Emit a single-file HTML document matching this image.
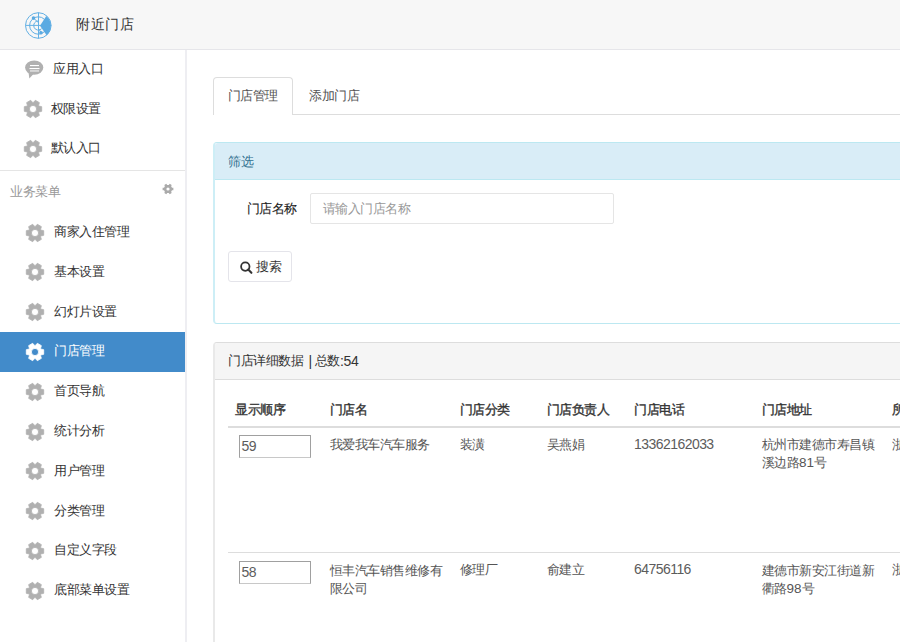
<!DOCTYPE html>
<html><head><meta charset="utf-8">
<style>
*{box-sizing:border-box;margin:0;padding:0}
html,body{width:900px;height:642px;overflow:hidden;background:#fff;font-family:"Liberation Sans",sans-serif;font-size:12.5px;letter-spacing:-0.5px;color:#333}
.a{position:absolute;white-space:nowrap;line-height:16px}
.hdr{position:absolute;left:0;top:0;width:900px;height:50px;background:#f7f7f7;border-bottom:1px solid #e6e6ea}
.side{position:absolute;left:0;top:50px;width:187px;height:592px;border-right:2px solid #eeeef2;background:#fff}
.act{position:absolute;left:0;top:332px;width:185px;height:40px;background:#428bca}
.mt{color:#333}
.sep{position:absolute;left:0;top:170px;width:185px;height:1px;background:#e5e5e5}
.tabline{position:absolute;left:213px;top:114px;width:700px;height:1px;background:#ddd}
.tab{position:absolute;left:213px;top:77px;width:80px;height:38px;border:1px solid #ddd;border-bottom:none;border-radius:4px 4px 0 0;background:#fff}
.p1{position:absolute;left:213px;top:142px;width:720px;height:182px;border:1px solid #bce8f1;border-left:2px solid #cdeef6;border-radius:4px}
.p1h{position:absolute;left:0;top:0;width:100%;height:37px;background:#d9edf7;border-bottom:1px solid #bce8f1;border-radius:3px 3px 0 0}
.inp{position:absolute;left:310px;top:193px;width:304px;height:31px;border:1px solid #e5e5e5;border-radius:2px;background:#fff}
.btn{position:absolute;left:228px;top:251px;width:64px;height:31px;border:1px solid #e4e4ea;border-radius:3px;background:#fff}
.p2{position:absolute;left:213px;top:342px;width:720px;height:400px;border:1px solid #ddd;border-left:2px solid #e9e9e9;border-radius:4px}
.p2h{position:absolute;left:0;top:0;width:100%;height:37px;background:#f5f5f5;border-bottom:1px solid #ddd;border-radius:3px 3px 0 0}
.th{-webkit-text-stroke:0.35px #333;color:#333}
.hl{position:absolute;left:228px;top:426px;width:700px;height:2px;background:#ddd}
.rl{position:absolute;left:228px;top:552px;width:700px;height:1px;background:#ddd}
.ni{position:absolute;width:72px;height:23px;border:1px solid #a0a0a0;border-bottom-color:#c8c8c8;background:#fff}
.td{color:#555}
.dg{font-size:14px;letter-spacing:-0.55px;color:#5c5c5c}
</style></head><body>
<svg width="0" height="0" style="position:absolute"><defs>
<path id="g" fill-rule="evenodd" d="M15.88 7.00 L18.69 7.67 L18.69 12.33 L15.88 13.00 L15.54 13.59 L16.36 16.36 L12.33 18.69 L10.35 16.59 L9.65 16.59 L7.67 18.69 L3.64 16.36 L4.46 13.59 L4.12 13.00 L1.31 12.33 L1.31 7.67 L4.12 7.00 L4.46 6.41 L3.64 3.64 L7.67 1.31 L9.65 3.41 L10.35 3.41 L12.33 1.31 L16.36 3.64 L15.54 6.41Z M13.60 10.00 A3.6 3.6 0 1 0 6.40 10.00 A3.6 3.6 0 1 0 13.60 10.00Z"/>
<path id="sg" fill-rule="evenodd" d="M9.98 4.66 L11.38 4.86 L11.38 7.14 L9.98 7.34 L9.15 8.78 L9.68 10.09 L7.70 11.23 L6.83 10.12 L5.17 10.12 L4.30 11.23 L2.32 10.09 L2.85 8.78 L2.02 7.34 L0.62 7.14 L0.62 4.86 L2.02 4.66 L2.85 3.22 L2.32 1.91 L4.30 0.77 L5.17 1.88 L6.83 1.88 L7.70 0.77 L9.68 1.91 L9.15 3.22Z M7.60 6.00 A1.6 1.6 0 1 0 4.40 6.00 A1.6 1.6 0 1 0 7.60 6.00Z"/>
</defs></svg>
<div class="hdr"></div>
<svg class="a" style="left:23px;top:10px" width="31" height="31" viewBox="0 0 31 31">
  <g fill="none" stroke="#63b0e4" stroke-width="1.0">
    <circle cx="15.3" cy="15.5" r="12.8"/>
    <circle cx="15.3" cy="15.5" r="8.7"/>
    <path d="M15.3 10.9 A4.6 4.6 0 1 0 18.6 18.7"/>
    <line x1="15.5" y1="2.5" x2="15.5" y2="28.5"/>
    <line x1="2.5" y1="15.4" x2="28.3" y2="15.4"/>
    <path d="M10.5 8.1 L15.3 12.5" />
    <path d="M18 22.7 L16 19" />
  </g>
  <path d="M17 15.8 L23.3 6.0 A12.8 12.8 0 0 1 23.6 25.3 Z" fill="#5aaae2"/>
  <circle cx="10.5" cy="8.1" r="1.8" fill="#5aaae2"/>
  <circle cx="18" cy="22.7" r="1.8" fill="#5aaae2"/>
</svg>
<div class="a" style="left:76px;top:15px;font-size:14px;letter-spacing:0.5px;line-height:18px;color:#333">附近门店</div>
<div class="side"></div>
<div class="sep"></div>
<div class="act"></div>
<svg class="a" style="left:24px;top:59px" width="21" height="21" viewBox="0 0 21 21">
  <ellipse cx="10.2" cy="8.6" rx="9.1" ry="7.2" fill="#b0b0b0"/>
  <path d="M4.5 13 L5.3 19.6 L10 14.5 Z" fill="#b0b0b0"/>
  <rect x="6" y="6" width="9" height="1.1" fill="#fff"/>
  <rect x="5.5" y="9" width="10" height="1.1" fill="#fff"/>
  <rect x="6" y="11.3" width="9" height="1.3" fill="#e8e8e8"/>
</svg>
<div class="a mt" style="left:53px;top:60.6px">应用入口</div>
<svg class="a" style="left:23.0px;top:99.4px" width="20" height="20"><use href="#g" fill="#b0b0b0" stroke="#b0b0b0" stroke-width="0.8" stroke-linejoin="round"/></svg>
<div class="a mt" style="left:50.5px;top:100.6px">权限设置</div>
<svg class="a" style="left:23.0px;top:139.0px" width="20" height="20"><use href="#g" fill="#b0b0b0" stroke="#b0b0b0" stroke-width="0.8" stroke-linejoin="round"/></svg>
<div class="a mt" style="left:50.5px;top:140.2px">默认入口</div>
<svg class="a" style="left:24.5px;top:222.6px" width="20" height="20"><use href="#g" fill="#b0b0b0" stroke="#b0b0b0" stroke-width="0.8" stroke-linejoin="round"/></svg>
<div class="a mt" style="left:54px;top:224.1px">商家入住管理</div>
<svg class="a" style="left:24.5px;top:262.3px" width="20" height="20"><use href="#g" fill="#b0b0b0" stroke="#b0b0b0" stroke-width="0.8" stroke-linejoin="round"/></svg>
<div class="a mt" style="left:54px;top:263.8px">基本设置</div>
<svg class="a" style="left:24.5px;top:302.0px" width="20" height="20"><use href="#g" fill="#b0b0b0" stroke="#b0b0b0" stroke-width="0.8" stroke-linejoin="round"/></svg>
<div class="a mt" style="left:54px;top:303.5px">幻灯片设置</div>
<svg class="a" style="left:24.5px;top:341.8px" width="20" height="20"><use href="#g" fill="#fff" stroke="#fff" stroke-width="0.8" stroke-linejoin="round"/></svg>
<div class="a mt" style="left:54px;top:343.3px;color:#fff">门店管理</div>
<svg class="a" style="left:24.5px;top:381.7px" width="20" height="20"><use href="#g" fill="#b0b0b0" stroke="#b0b0b0" stroke-width="0.8" stroke-linejoin="round"/></svg>
<div class="a mt" style="left:54px;top:383.2px">首页导航</div>
<svg class="a" style="left:24.5px;top:421.5px" width="20" height="20"><use href="#g" fill="#b0b0b0" stroke="#b0b0b0" stroke-width="0.8" stroke-linejoin="round"/></svg>
<div class="a mt" style="left:54px;top:423px">统计分析</div>
<svg class="a" style="left:24.5px;top:461.3px" width="20" height="20"><use href="#g" fill="#b0b0b0" stroke="#b0b0b0" stroke-width="0.8" stroke-linejoin="round"/></svg>
<div class="a mt" style="left:54px;top:462.8px">用户管理</div>
<svg class="a" style="left:24.5px;top:501.0px" width="20" height="20"><use href="#g" fill="#b0b0b0" stroke="#b0b0b0" stroke-width="0.8" stroke-linejoin="round"/></svg>
<div class="a mt" style="left:54px;top:502.5px">分类管理</div>
<svg class="a" style="left:24.5px;top:540.7px" width="20" height="20"><use href="#g" fill="#b0b0b0" stroke="#b0b0b0" stroke-width="0.8" stroke-linejoin="round"/></svg>
<div class="a mt" style="left:54px;top:542.2px">自定义字段</div>
<svg class="a" style="left:24.5px;top:580.5px" width="20" height="20"><use href="#g" fill="#b0b0b0" stroke="#b0b0b0" stroke-width="0.8" stroke-linejoin="round"/></svg>
<div class="a mt" style="left:54px;top:582px">底部菜单设置</div>
<div class="a" style="left:10px;top:184px;color:#999">业务菜单</div>
<svg class="a" style="left:162px;top:183px" width="12" height="12"><use href="#sg" fill="#aaa"/></svg>

<div class="tabline"></div>
<div class="tab"></div>
<div class="a" style="left:227.5px;top:88px;color:#555">门店管理</div>
<div class="a" style="left:309px;top:88px;color:#555">添加门店</div>

<div class="p1"><div class="p1h"></div></div>
<div class="a" style="left:228px;top:154px;color:#31708f">筛选</div>
<div class="a" style="left:246.5px;top:201px;-webkit-text-stroke:0.1px #222;color:#222">门店名称</div>
<div class="inp"></div>
<div class="a" style="left:322.5px;top:201px;color:#999">请输入门店名称</div>
<div class="btn"></div>
<svg class="a" style="left:238.5px;top:260px" width="15" height="15" viewBox="0 0 15 15">
  <circle cx="6.3" cy="6.6" r="4.2" fill="none" stroke="#333" stroke-width="1.8"/>
  <line x1="9.2" y1="9.6" x2="12.4" y2="12.8" stroke="#333" stroke-width="2.1" stroke-linecap="round"/>
</svg>
<div class="a" style="left:256px;top:259px;color:#333">搜索</div>

<div class="p2"><div class="p2h"></div></div>
<div class="a" style="left:228px;top:353px;color:#333">门店详细数据</div>
<div class="a" style="left:308.5px;top:353px;color:#333;font-size:14px;letter-spacing:0">|</div>
<div class="a" style="left:314.5px;top:353px;color:#333">总数</div>
<div class="a" style="left:340px;top:352.5px;color:#333;font-size:14px;letter-spacing:-0.3px">:54</div>

<div class="a th" style="left:235px;top:402px">显示顺序</div>
<div class="a th" style="left:329.5px;top:402px">门店名</div>
<div class="a th" style="left:459.5px;top:402px">门店分类</div>
<div class="a th" style="left:546.7px;top:402px">门店负责人</div>
<div class="a th" style="left:634px;top:402px">门店电话</div>
<div class="a th" style="left:761.6px;top:402px">门店地址</div>
<div class="a th" style="left:892px;top:402px">所属</div>
<div class="hl"></div>

<div class="ni" style="left:239px;top:435px"></div>
<div class="a td dg" style="left:241.5px;top:438px">59</div>
<div class="a td" style="left:329.5px;top:437px">我爱我车汽车服务</div>
<div class="a td" style="left:459.5px;top:437px">装潢</div>
<div class="a td" style="left:546.7px;top:437px">吴燕娟</div>
<div class="a td dg" style="left:634px;top:436px">13362162033</div>
<div class="a td" style="left:761.6px;top:436px;line-height:18px">杭州市建德市寿昌镇<br>溪边路<span style="font-size:13.5px;letter-spacing:0">81</span>号</div>
<div class="a td" style="left:892px;top:437px">浙江</div>

<div class="rl"></div>
<div class="ni" style="left:239px;top:561px"></div>
<div class="a td dg" style="left:241.5px;top:564px">58</div>
<div class="a td" style="left:329.5px;top:562px;line-height:18px">恒丰汽车销售维修有<br>限公司</div>
<div class="a td" style="left:459.5px;top:562px">修理厂</div>
<div class="a td" style="left:546.7px;top:562px">俞建立</div>
<div class="a td dg" style="left:634px;top:561px">64756116</div>
<div class="a td" style="left:761.6px;top:562px;line-height:18px">建德市新安江街道新<br>衢路<span style="font-size:13.5px;letter-spacing:0">98</span>号</div>
<div class="a td" style="left:892px;top:562px">浙江</div>
</body></html>
